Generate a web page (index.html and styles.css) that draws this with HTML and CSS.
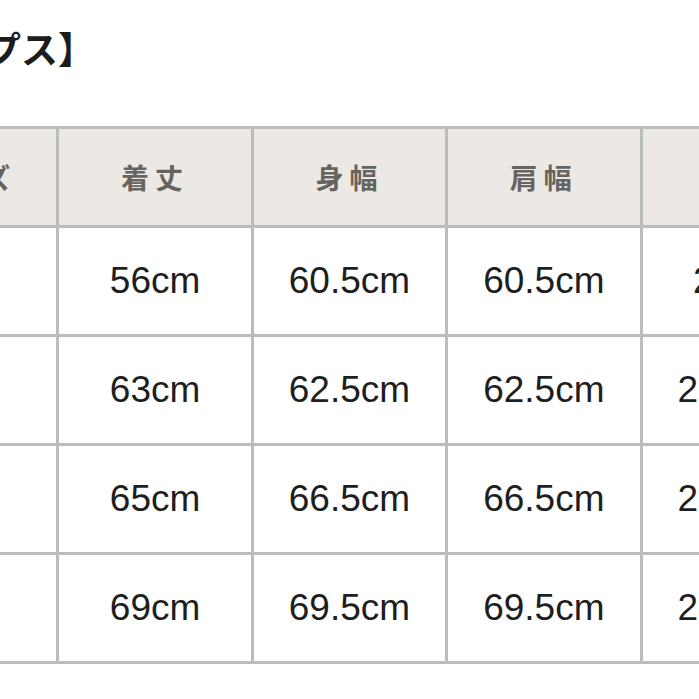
FILE: index.html
```html
<!DOCTYPE html>
<html lang="ja">
<head>
<meta charset="utf-8">
<title>サイズ表</title>
<link rel="stylesheet" href="styles.css">
</head>
<body>
<div class="sheet">
  <h2 class="title">【トップス】</h2>
  <table class="size-table">
    <colgroup>
      <col class="c"><col class="c"><col class="c"><col class="c"><col class="c">
    </colgroup>
    <thead>
      <tr>
        <th class="first">サイズ</th>
        <th>着丈</th>
        <th>身幅</th>
        <th>肩幅</th>
        <th>袖丈</th>
      </tr>
    </thead>
    <tbody>
      <tr><td>S</td><td>56cm</td><td>60.5cm</td><td>60.5cm</td><td>20cm</td></tr>
      <tr><td>M</td><td>63cm</td><td>62.5cm</td><td>62.5cm</td><td>21.5cm</td></tr>
      <tr><td>L</td><td>65cm</td><td>66.5cm</td><td>66.5cm</td><td>23.5cm</td></tr>
      <tr><td>XL</td><td>69cm</td><td>69.5cm</td><td>69.5cm</td><td>24.5cm</td></tr>
    </tbody>
  </table>
</div>
</body>
</html>
```
FILE: styles.css
```css
html, body {
  margin: 0;
  padding: 0;
  background: #ffffff;
  overflow: hidden;
}

.sheet {
  margin-left: -138px;
  width: 980px;
}

.title {
  margin: 30px 0 60px 11px;
  font-family: "Noto Sans CJK JP", sans-serif;
  font-weight: 700;
  font-size: 37px;
  line-height: 36px;
  color: #1c1c1c;
}

.size-table {
  border-collapse: collapse;
  table-layout: fixed;
  width: 972px;
}

.size-table col.c {
  width: 194.4px;
}

.size-table th,
.size-table td {
  border: 3px solid #bcbcbc;
  text-align: center;
  vertical-align: middle;
  padding: 0;
}

.size-table th {
  height: 96px;
  background: #ece9e4;
  color: #666461;
  font-family: "Noto Sans CJK JP", sans-serif;
  font-weight: 700;
  font-size: 28px;
  letter-spacing: 6px;
}

.size-table th.first {
  padding-left: 10px;
}

.size-table td {
  height: 106px;
  background: #ffffff;
  color: #1e1e1e;
  font-family: "Liberation Sans", Arial, sans-serif;
  font-size: 37px;
}
```
